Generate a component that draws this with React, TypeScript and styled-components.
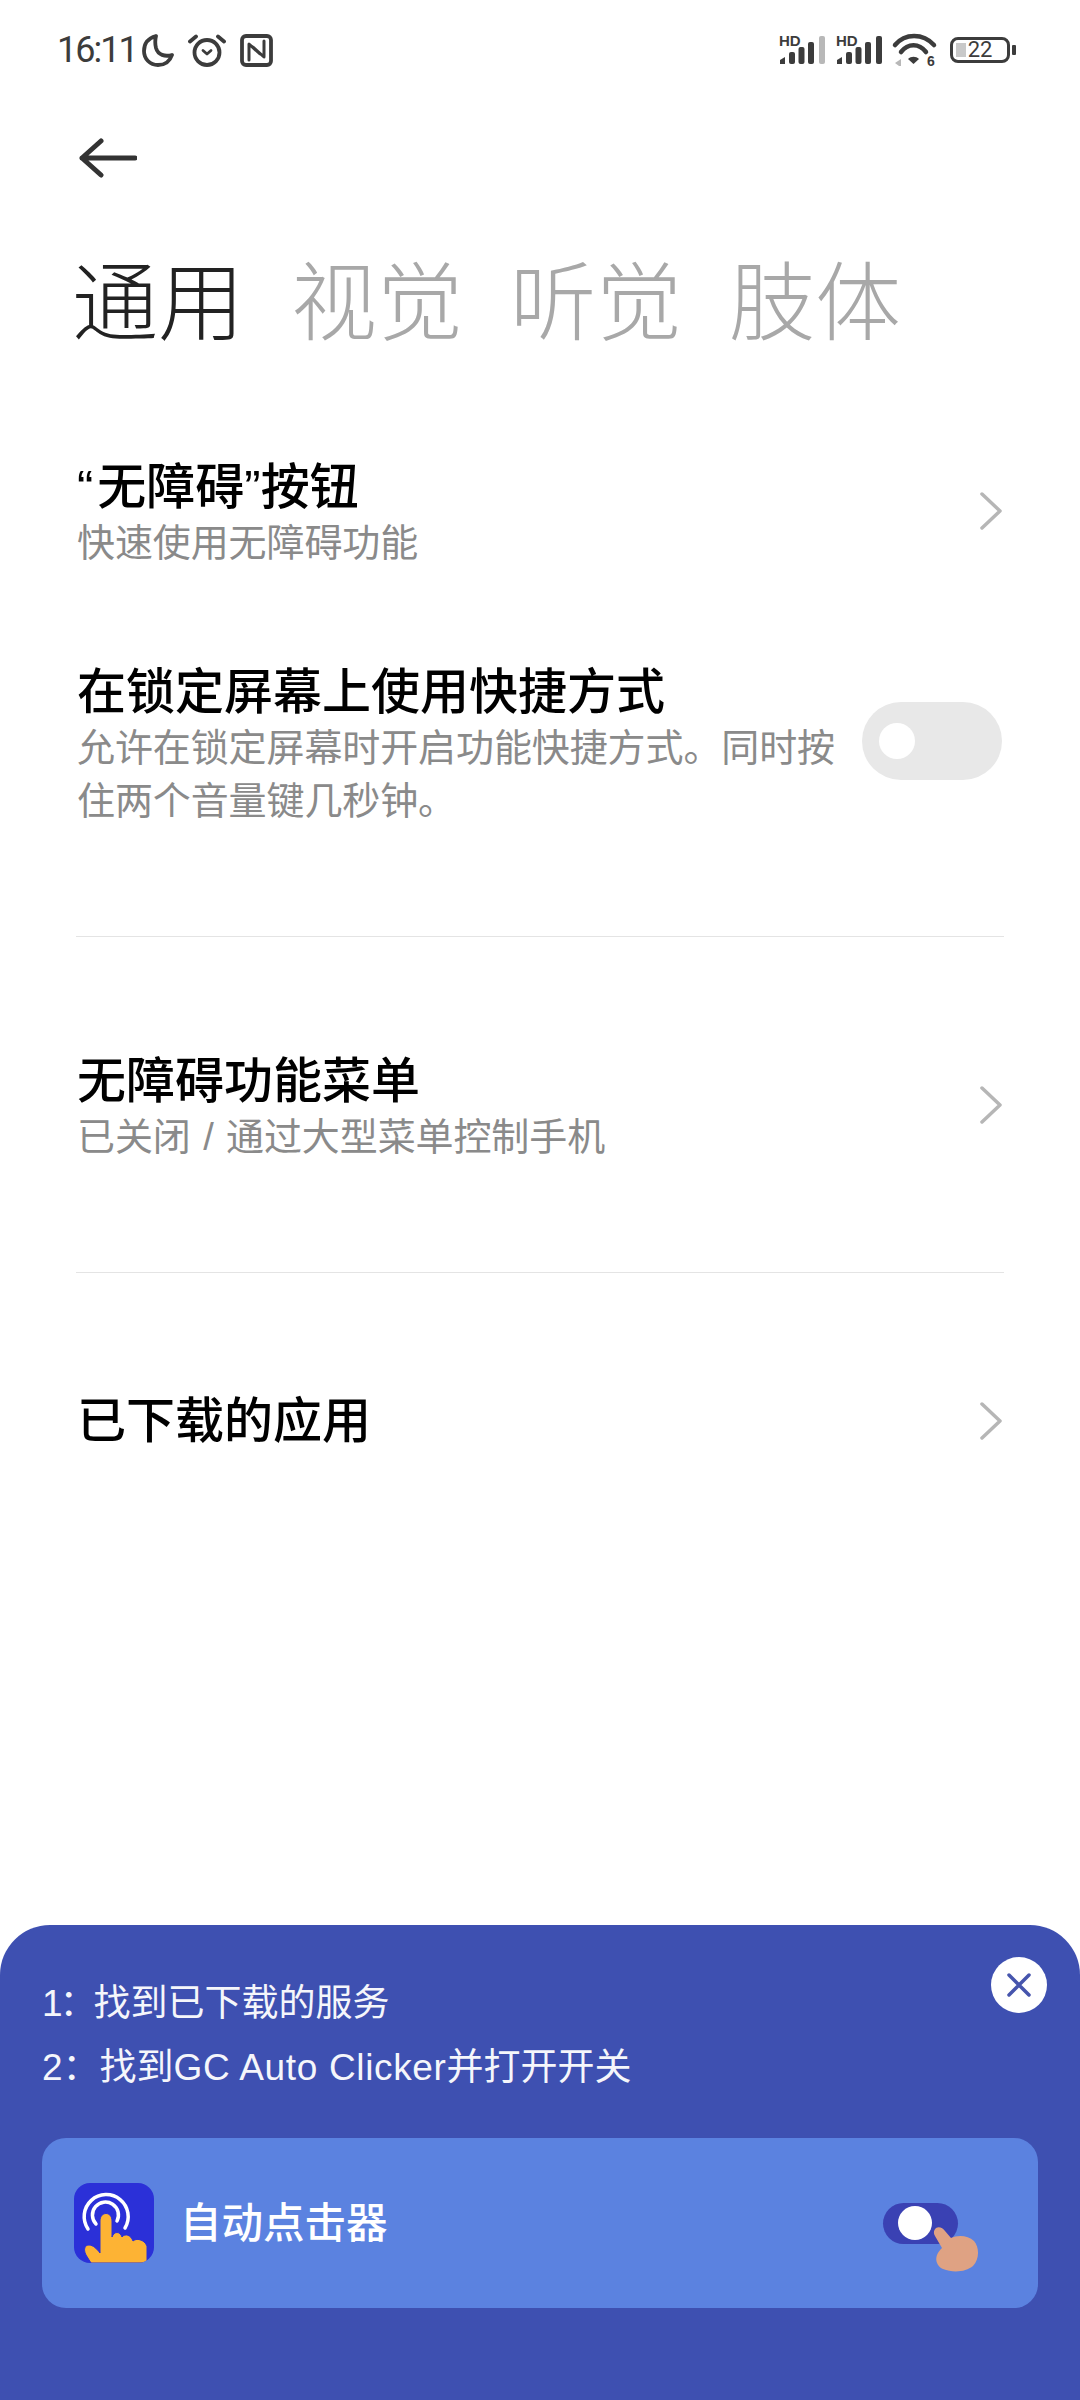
import React from "react";
import styled, { createGlobalStyle } from "styled-components";

const BODY_FONT = `"Liberation Sans", "Noto Sans CJK SC", sans-serif`;

const GlobalStyle = createGlobalStyle`
  html, body { margin: 0; padding: 0; background: #fff; }
  body { font-family: ${BODY_FONT}; }
  * { box-sizing: border-box; }
`;

const App: React.FC = () => {
  return (
    <Screen>
      <GlobalStyle />
      <StatusBar>
        <StatusLeft>
          <Time>16:11</Time>
          <MoonIcon />
          <AlarmIcon />
          <NfcIcon />
        </StatusLeft>
        <StatusRight>
          <SignalIcon weak />
          <SignalIcon />
          <WifiIcon />
          <Battery>
            <BatteryFill />
            <BatteryLevel>22</BatteryLevel>
          </Battery>
          <BatteryCap />
        </StatusRight>
      </StatusBar>

      <BackRow>
        <svg width="60" height="44" viewBox="0 0 60 44" fill="none" stroke="#333" strokeWidth="5" strokeLinecap="round" strokeLinejoin="round">
          <path d="M5 22H58M24 5L5 22L24 39" />
        </svg>
      </BackRow>

      <Tabs>
        <Tab active>通用</Tab>
        <Tab>视觉</Tab>
        <Tab>听觉</Tab>
        <Tab>肢体</Tab>
      </Tabs>

      <Section top={95}>
        <Row>
          <RowText>
            <RowTitle>
              <OpenQuote>“</OpenQuote>无障碍”按钮
            </RowTitle>
            <RowSub>快速使用无障碍功能</RowSub>
          </RowText>
          <Chevron />
        </Row>
        <ToggleRow>
          <RowText>
            <RowTitle>在锁定屏幕上使用快捷方式</RowTitle>
            <RowSub>允许在锁定屏幕时开启功能快捷方式。同时按住两个音量键几秒钟。</RowSub>
          </RowText>
          <Toggle>
            <ToggleKnob />
          </Toggle>
        </ToggleRow>
      </Section>

      <Divider />

      <Section top={114}>
        <Row>
          <RowText>
            <RowTitle>无障碍功能菜单</RowTitle>
            <RowSub>已关闭 / 通过大型菜单控制手机</RowSub>
          </RowText>
          <Chevron />
        </Row>
      </Section>

      <Divider />

      <Section top={118}>
        <Row>
          <RowText>
            <RowTitle>已下载的应用</RowTitle>
          </RowText>
          <Chevron flush />
        </Row>
      </Section>

      <Sheet>
        <CloseButton>
          <svg width="24" height="24" viewBox="0 0 24 24" fill="none" stroke="#4655ad" strokeWidth="3.500" strokeLinecap="round">
            <path d="M2 2L22 22M22 2L2 22" />
          </svg>
        </CloseButton>
        <Step>
          <StepIndex tight>1：</StepIndex>找到已下载的服务
        </Step>
        <Step>
          <StepIndex>2：</StepIndex>找到<LatinName>GC Auto Clicker</LatinName>并打开开关
        </Step>
        <AppCard>
          <AppIcon>
            <svg width="80" height="80" viewBox="0 0 80 80" fill="none">
              <path d="M14 46A22 22 0 1 1 51 45" stroke="#fff" strokeWidth="3.500" strokeLinecap="round" />
              <path d="M22 41A13 13 0 1 1 43 38" stroke="#fff" strokeWidth="3.500" strokeLinecap="round" />
              <path
                d="M17 80L12 72C9 66 11 62 15 62C19 62 23 66 26 70V38C26 28 38 28 38 38V54C40 48 46 48 48 54C51 50 57 52 59 58C62 55 70 56 73 63V80Z"
                fill="#fdb334"
                stroke="#2b30d8"
                strokeWidth="1"
                strokeLinejoin="round"
              />
            </svg>
          </AppIcon>
          <AppName>自动点击器</AppName>
          <CardSwitch>
            <CardKnob />
            <HandIcon />
          </CardSwitch>
        </AppCard>
      </Sheet>
    </Screen>
  );
};

const MoonIcon = () => (
  <svg width="32" height="33" viewBox="0 0 32 33" fill="none" stroke="#3c3c3c" strokeWidth="3.800" strokeLinejoin="round">
    <path d="M14 2C7 4 2 9 2 17C2 25 8 31 16 31C23 31 28 27 30 21C23 23 16 21 14 14C13 10 13 6 14 2Z" />
  </svg>
);

const AlarmIcon = () => (
  <svg width="38" height="33" viewBox="0 0 38 33" fill="none" stroke="#3c3c3c" strokeWidth="3.800" strokeLinecap="round" strokeLinejoin="round">
    <circle cx="19" cy="18.500" r="12.500" />
    <path d="M2 7.500L8 2.500M36 7.500L30 2.500" />
    <path d="M15 16.500L19 20L23 16.500" strokeWidth="2.800" />
  </svg>
);

const NfcIcon = () => (
  <svg width="33" height="33" viewBox="0 0 33 33" fill="none" stroke="#3c3c3c" strokeLinecap="round" strokeLinejoin="round">
    <rect x="2" y="2" width="29" height="29" rx="4" strokeWidth="3.800" />
    <path d="M9 26V10L20 20M24 7V23L13 13" strokeWidth="3" />
  </svg>
);

const SignalIcon: React.FC<{ weak?: boolean }> = ({ weak }) => (
  <GlyphSvg width="47" height="28" viewBox="0 0 47 28">
    <text x="0" y="10" fontFamily="Liberation Sans, sans-serif" fontWeight="700" fontSize="15" fill="#3c3c3c">HD</text>
    <path d="M1 28V24L6 21V28Z" fill="#3c3c3c" />
    <rect x="10" y="16" width="6" height="12" rx="2" fill="#3c3c3c" />
    <rect x="19.500" y="11" width="6" height="17" rx="2" fill="#3c3c3c" />
    <rect x="29" y="6" width="6" height="22" rx="2" fill="#3c3c3c" />
    <rect x="40" y="0" width="6" height="28" rx="2" fill={weak ? "#b8b8b8" : "#3c3c3c"} />
  </GlyphSvg>
);

const WifiIcon = () => (
  <GlyphSvg width="44" height="33" viewBox="0 0 44 33" fill="none">
    <path d="M2 11C12 -1 30 -1 41 11" stroke="#3c3c3c" strokeWidth="4.500" strokeLinecap="round" />
    <path d="M8 18C15 9 26 9 33 18" stroke="#3c3c3c" strokeWidth="4.500" strokeLinecap="round" />
    <path d="M15 25C18 22 23 22 26 25L20.500 30Z" fill="#3c3c3c" />
    <path d="M2 29L8 25V32H6Z" fill="#b8b8b8" />
    <text x="34" y="32" fontFamily="Liberation Sans, sans-serif" fontWeight="700" fontSize="14" fill="#3c3c3c">6</text>
  </GlyphSvg>
);

const HandIcon = () => (
  <HandSvg width="47" height="46" viewBox="0 0 47 46">
    <path
      d="M3 1C6 -1 10 1 12 4L18 11C24 8 35 8 41 14C47 21 46 33 40 39C33 45 20 46 10 42C4 39 2 33 4 28C5 25 7 23 9 21L2 9C0 6 1 3 3 1Z"
      fill="#dfa283"
    />
  </HandSvg>
);

const Chevron: React.FC<{ flush?: boolean }> = ({ flush }) => (
  <ChevronSvg flush={flush} width="22" height="38" viewBox="0 0 22 38" fill="none" stroke="#b6b6b6" strokeWidth="3.500" strokeLinecap="round" strokeLinejoin="round">
    <path d="M2 2L20 19L2 36" />
  </ChevronSvg>
);

const Screen = styled.div`
  position: relative;
  width: 1080px;
  height: 2400px;
  overflow: hidden;
  background: #fff;
  font-family: ${BODY_FONT};
`;

const StatusBar = styled.header`
  display: flex;
  align-items: center;
  justify-content: space-between;
  height: 100px;
  padding: 0 64px 0 57px;
`;

const StatusLeft = styled.div`
  display: flex;
  align-items: center;
  gap: 14px;
`;

const Time = styled.span`
  margin-right: -9px;
  font-family: "Roboto", "Liberation Sans", sans-serif;
  font-size: 36px;
  color: #3c3c3c;
  letter-spacing: -2px;
`;

const GlyphSvg = styled.svg`
  overflow: visible;
`;

const StatusRight = styled.div`
  display: flex;
  align-items: center;
  gap: 10px;
`;

const Battery = styled.div`
  position: relative;
  display: flex;
  align-items: center;
  justify-content: center;
  width: 60px;
  height: 26px;
  margin-left: 3px;
  border: 3px solid #3c3c3c;
  border-radius: 8px;
`;

const BatteryFill = styled.div`
  position: absolute;
  left: 3px;
  top: 3px;
  bottom: 3px;
  width: 10px;
  background: #c9c9c9;
`;

const BatteryLevel = styled.span`
  position: relative;
  font-family: "Roboto", "Liberation Sans", sans-serif;
  font-size: 22px;
  line-height: 1;
  color: #3c3c3c;
`;

const BatteryCap = styled.div`
  width: 4px;
  height: 10px;
  margin-left: -8px;
  background: #3c3c3c;
  border-radius: 1px;
`;

const BackRow = styled.div`
  display: flex;
  align-items: center;
  height: 56px;
  margin-top: 30px;
  padding-left: 77px;
`;

const Tabs = styled.nav`
  display: flex;
  gap: 47px;
  margin-top: 60px;
  padding-left: 72px;
`;

const Tab = styled.span<{ active?: boolean }>`
  font-size: 86px;
  line-height: 116px;
  font-weight: 300;
  color: ${(p) => (p.active ? "#222" : "#a8a8a8")};
`;

const Section = styled.section<{ top: number }>`
  padding: ${(p) => p.top}px 78px 0 77px;
`;

const Row = styled.div`
  display: flex;
  align-items: center;
  justify-content: space-between;
`;

const ToggleRow = styled(Row)`
  margin-top: 92px;
`;

const RowText = styled.div`
  flex: 1;
  min-width: 0;
`;

const RowTitle = styled.div`
  font-size: 49px;
  line-height: 60px;
  font-weight: 500;
  color: #000;
`;

const OpenQuote = styled.span`
  padding-right: 4px;
`;

const RowSub = styled.div`
  width: 770px;
  font-size: 38px;
  line-height: 53px;
  letter-spacing: -0.1px;
  word-spacing: 2px;
  color: #8a8a8a;
`;

const ChevronSvg = styled.svg<{ flush?: boolean }>`
  flex: none;
  margin-bottom: ${(p) => (p.flush ? "0" : "6px")};
`;

const Toggle = styled.div`
  flex: none;
  display: flex;
  align-items: center;
  width: 140px;
  height: 78px;
  padding-left: 17px;
  margin-bottom: 8px;
  background: #e8e8e8;
  border-radius: 39px;
`;

const ToggleKnob = styled.div`
  width: 36px;
  height: 36px;
  border-radius: 50%;
  background: #fff;
`;

const Divider = styled.hr`
  height: 1px;
  margin: 108px 76px 0;
  border: 0;
  background: #e4e4e4;
`;

const Sheet = styled.section`
  position: absolute;
  left: 0;
  right: 0;
  top: 1925px;
  bottom: 0;
  padding: 47px 42px 0;
  background: #3e50b1;
  border-radius: 50px 50px 0 0;
`;

const CloseButton = styled.div`
  position: absolute;
  top: 32px;
  right: 33px;
  display: flex;
  align-items: center;
  justify-content: center;
  width: 56px;
  height: 56px;
  background: #fff;
  border-radius: 50%;
`;

const Step = styled.div`
  font-size: 37px;
  line-height: 64px;
  color: #fff;
  opacity: 0.95;
`;

const StepIndex = styled.span<{ tight?: boolean }>`
  letter-spacing: ${(p) => (p.tight ? "-3px" : "0")};
`;

const LatinName = styled.span`
  letter-spacing: 0.65px;
`;

const AppCard = styled.div`
  display: flex;
  align-items: center;
  height: 170px;
  margin-top: 38px;
  padding: 0 80px 0 32px;
  background: #5b82e0;
  border-radius: 24px;
`;

const AppIcon = styled.div`
  width: 80px;
  height: 80px;
  overflow: hidden;
  background: #2b30d8;
  border-radius: 16px;
`;

const AppName = styled.div`
  flex: 1;
  margin: 0 0 6px 26px;
  font-size: 41.5px;
  font-weight: 500;
  color: #fff;
`;

const CardSwitch = styled.div`
  position: relative;
  display: flex;
  align-items: center;
  width: 75px;
  height: 41px;
  padding-left: 15px;
  background: #3a41b3;
  border-radius: 21px;
`;

const CardKnob = styled.div`
  width: 34px;
  height: 34px;
  border-radius: 50%;
  background: #fff;
`;

const HandSvg = styled.svg`
  position: absolute;
  left: 50px;
  top: 24px;
`;

export default App;
